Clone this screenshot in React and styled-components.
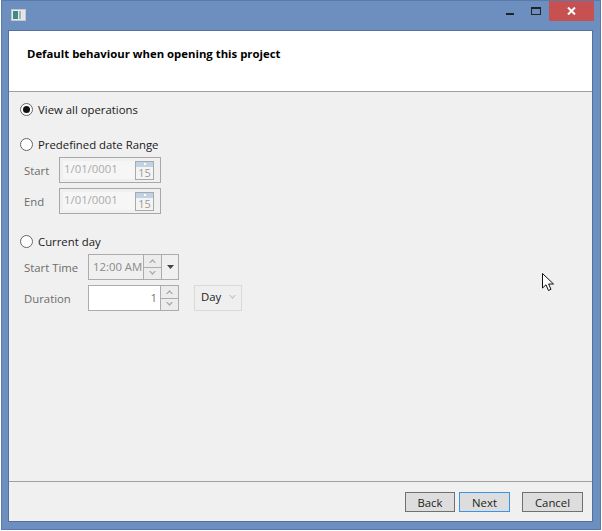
import React from 'react';
import styled, { createGlobalStyle } from 'styled-components';

const GlobalStyle = createGlobalStyle`
  html, body {
    margin: 0;
    padding: 0;
    background: #fff;
  }
  body {
    font-family: 'Open Sans', 'Liberation Sans', sans-serif;
    font-size: 11.35px;
    color: #111;
  }
`;

const Frame = styled.div`
  position: relative;
  box-sizing: border-box;
  width: 600px;
  height: 530px;
  margin-left: 1px;
  background: #6d8fbf;
  border: 1px solid #5a7aa8;
  display: flex;
  flex-direction: column;
`;

const TitleBar = styled.div`
  height: 29px;
  flex: none;
  display: flex;
  align-items: flex-start;
  justify-content: space-between;
  padding-left: 9px;
`;

const AppIcon = styled.svg`
  margin-top: 8px;
`;

const Controls = styled.div`
  display: flex;
  align-items: flex-start;
  padding-right: 6px;
`;

const ControlButton = styled.div`
  width: ${(p) => p.$width}px;
  height: 20px;
  padding-top: ${(p) => p.$iconDrop || 0}px;
  box-sizing: border-box;
  display: flex;
  align-items: center;
  justify-content: center;
  background: ${(p) => p.$bg || 'transparent'};
`;

const Client = styled.div`
  flex: 1;
  margin: 0 7px 7px 6px;
  display: flex;
  flex-direction: column;
  background: #f0f0f0;
  border: 1px solid #54719c;
`;

const Header = styled.div`
  height: 61px;
  flex: none;
  box-sizing: border-box;
  background: #fff;
  border-bottom: 1px solid #a0a0a0;
  padding: 15px 0 0 18px;
  font-weight: 700;
  line-height: 16px;
  color: #000;
`;

const Body = styled.div`
  flex: 1;
  display: flex;
  flex-direction: column;
  padding: 8px 0 0 11px;
`;

const RadioRow = styled.div`
  display: flex;
  align-items: center;
  gap: 5px;
  height: 18px;
  margin-top: ${(p) => p.$top || 0}px;
  color: #1a1a1a;
`;

const RadioCircle = styled.span`
  box-sizing: border-box;
  width: 13px;
  height: 13px;
  border-radius: 50%;
  border: 1px solid #666;
  background: #fff;
  display: flex;
  align-items: center;
  justify-content: center;

  &::after {
    content: '';
    display: ${(p) => (p.$checked ? 'block' : 'none')};
    width: 7px;
    height: 7px;
    border-radius: 50%;
    background: #111;
  }
`;

const FieldRow = styled.div`
  display: flex;
  align-items: center;
  height: 26px;
  margin-top: ${(p) => p.$top || 0}px;
  padding-left: 4px;
`;

const FieldLabel = styled.span`
  width: ${(p) => p.$width}px;
  flex: none;
  color: #6d6d6d;
`;

const DateBox = styled.div`
  box-sizing: border-box;
  width: 102px;
  height: 26px;
  display: flex;
  align-items: center;
  justify-content: space-between;
  padding: 0 6px 0 3px;
  background: #f0f0f0;
  border: 1px solid #a8a8a8;
`;

const DateValue = styled.span`
  color: #ababab;
  background: #f6f6f6;
  width: 71px;
  padding: 0 0 2px 1px;
  line-height: 16px;
`;

const CalendarIcon = styled.div`
  box-sizing: border-box;
  width: 19px;
  height: 19px;
  border: 1px solid #a9a9a9;
  background: #f4f4f4;
  display: flex;
  flex-direction: column;
`;

const CalendarTop = styled.div`
  height: 5px;
  flex: none;
  background: #bed3e6;
  display: flex;
  justify-content: center;
  align-items: center;

  &::after {
    content: '';
    width: 2px;
    height: 2px;
    background: #fff;
  }
`;

const CalendarDay = styled.div`
  flex: 1;
  font-size: 11px;
  line-height: 12px;
  text-align: center;
  color: #9a9a9a;
`;

const TimeGroup = styled.div`
  box-sizing: border-box;
  width: 91px;
  height: 26px;
  display: flex;
  border: 1px solid ${(p) => p.$border};
  background: ${(p) => p.$bg};
`;

const TimeValue = styled.div`
  flex: 1;
  min-width: 0;
  white-space: nowrap;
  line-height: 24px;
  padding: 0 ${(p) => (p.$right ? '3px' : '0')} 0 ${(p) => (p.$right ? '0' : '4px')};
  text-align: ${(p) => (p.$right ? 'right' : 'left')};
  color: ${(p) => p.$color};
`;

const Spinner = styled.div`
  width: 17px;
  flex: none;
  display: flex;
  flex-direction: column;
  border-left: 1px solid #acacac;
`;

const SpinnerPart = styled.div`
  flex: 1;
  display: flex;
  align-items: center;
  justify-content: center;
  background: #ececec;
  border-top: ${(p) => (p.$lower ? '1px solid #acacac' : 'none')};
`;

const Dropdown = styled.div`
  width: 16px;
  flex: none;
  display: flex;
  align-items: center;
  justify-content: center;
  border-left: 1px solid #acacac;
  background: #f0f0f0;
`;

const DayBox = styled.div`
  box-sizing: border-box;
  width: 48px;
  height: 26px;
  margin-left: 15px;
  display: flex;
  align-items: center;
  justify-content: space-between;
  padding: 0 5px 3px 6px;
  border: 1px solid #d9d9d9;
  background: #efefef;
  color: #222;
`;

const Footer = styled.div`
  height: 40px;
  flex: none;
  box-sizing: border-box;
  border-top: 1px solid #a0a0a0;
  display: flex;
  align-items: flex-start;
  padding: 10px 9px 0 0;
  justify-content: flex-end;
`;

const WizardButton = styled.div`
  box-sizing: border-box;
  width: ${(p) => p.$width}px;
  height: 20px;
  margin-left: ${(p) => p.$gap || 0}px;
  display: flex;
  align-items: center;
  justify-content: center;
  background: #dddddd;
  border: 1px solid ${(p) => (p.$focused ? '#3c94e6' : '#707070')};
  color: #222;
`;

const Pointer = styled.svg`
  position: absolute;
  left: 539px;
  top: 271px;
`;

// thick chevron, the way the WPF spinner and combo glyphs look
const Chevron = ({ up, color = '#a8a8a8' }) => (
  <svg width="7" height="4" viewBox="0 0 7 4">
    <path
      d={up ? 'M0 4 L3.5 0 L7 4 L5.5 4 L3.5 2 L1.5 4 Z' : 'M0 0 L1.5 0 L3.5 2 L5.5 0 L7 0 L3.5 4 Z'}
      fill={color}
    />
  </svg>
);

const SolidArrow = () => (
  <svg width="7" height="4" viewBox="0 0 7 4">
    <path d="M0 0 L7 0 L3.5 4 Z" fill="#444" />
  </svg>
);

const SpinnerBox = () => (
  <Spinner>
    <SpinnerPart><Chevron up /></SpinnerPart>
    <SpinnerPart $lower><Chevron /></SpinnerPart>
  </Spinner>
);

const DateField = ({ label, top }) => (
  <FieldRow $top={top}>
    <FieldLabel $width={35}>{label}</FieldLabel>
    <DateBox>
      <DateValue>1/01/0001</DateValue>
      <CalendarIcon>
        <CalendarTop />
        <CalendarDay>15</CalendarDay>
      </CalendarIcon>
    </DateBox>
  </FieldRow>
);

const App = () => {
  return (
    <>
      <GlobalStyle />
      <Frame>
        <TitleBar>
          <AppIcon width="15" height="12" viewBox="0 0 15 12">
            <rect x="0.5" y="0.5" width="14" height="11" fill="#e8e8e8" stroke="#c4c8cc" />
            <rect x="2" y="2" width="5" height="8" fill="#3f8a86" />
            <rect x="8" y="2" width="2" height="8" fill="#9fb4b8" />
            <rect x="11" y="2" width="2" height="8" fill="#dfe6e0" />
          </AppIcon>
          <Controls>
            <ControlButton $width={27} $iconDrop={5}>
              <svg width="8" height="2"><rect width="8" height="2" fill="#222" /></svg>
            </ControlButton>
            <ControlButton $width={26}>
              <svg width="10" height="8" viewBox="0 0 10 8">
                <rect x="0.5" y="0.5" width="9" height="7" fill="none" stroke="#222" />
                <rect width="10" height="2" fill="#222" />
              </svg>
            </ControlButton>
            <ControlButton $width={45} $bg="#c75050">
              <svg width="9" height="8" viewBox="0 0 9 8">
                <path d="M1 0.5 L8 7.5 M8 0.5 L1 7.5" stroke="#fff" strokeWidth="2" />
              </svg>
            </ControlButton>
          </Controls>
        </TitleBar>
        <Client>
          <Header>Default behaviour when opening this project</Header>
          <Body>
            <RadioRow>
              <RadioCircle $checked />
              View all operations
            </RadioRow>
            <RadioRow $top={17}>
              <RadioCircle />
              Predefined date Range
            </RadioRow>
            <DateField label="Start" top={4} />
            <DateField label="End" top={5} />
            <RadioRow $top={18}>
              <RadioCircle />
              Current day
            </RadioRow>
            <FieldRow $top={4}>
              <FieldLabel $width={64}>Start Time</FieldLabel>
              <TimeGroup $border="#acacac" $bg="#f0f0f0">
                <TimeValue $color="#8a8a8a">12:00 AM</TimeValue>
                <SpinnerBox />
                <Dropdown><SolidArrow /></Dropdown>
              </TimeGroup>
            </FieldRow>
            <FieldRow $top={5}>
              <FieldLabel $width={64}>Duration</FieldLabel>
              <TimeGroup $border="#acacac" $bg="#fff">
                <TimeValue $right $color="#777">1</TimeValue>
                <SpinnerBox />
              </TimeGroup>
              <DayBox>
                Day
                <Chevron color="#c8c8c8" />
              </DayBox>
            </FieldRow>
          </Body>
          <Footer>
            <WizardButton $width={50}>Back</WizardButton>
            <WizardButton $width={51} $gap={4} $focused>Next</WizardButton>
            <WizardButton $width={61} $gap={12}>Cancel</WizardButton>
          </Footer>
        </Client>
        <Pointer width="14" height="20" viewBox="0 0 14 20">
          <path d="M1.5 1.5 L1.5 16 L5 12.8 L7.5 18.5 L10 17.3 L7.6 12 L12.5 12 Z" fill="#fff" stroke="#111" strokeWidth="1" />
        </Pointer>
      </Frame>
    </>
  );
};

export default App;
